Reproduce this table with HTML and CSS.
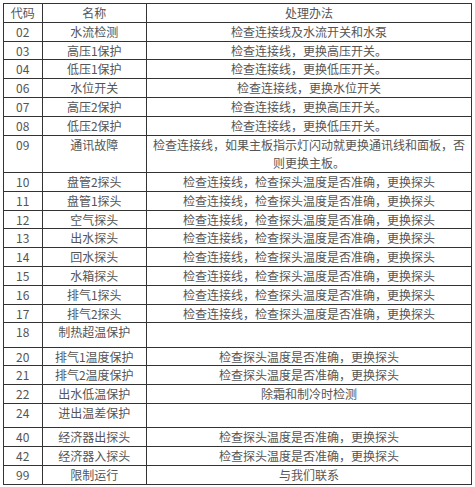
FILE: index.html
```html
<!DOCTYPE html>
<html lang="zh-CN">
<head>
<meta charset="utf-8">
<title>故障代码表</title>
<link rel="stylesheet" href="styles.css">
</head>
<body>
<table class="codes">
  <colgroup>
    <col class="c-code">
    <col class="c-name">
    <col class="c-fix">
  </colgroup>
  <tr><td>代码</td><td>名称</td><td>处理办法</td></tr>
  <tr><td>02</td><td>水流检测</td><td>检查连接线及水流开关和水泵</td></tr>
  <tr><td>03</td><td>高压1保护</td><td>检查连接线，更换高压开关。</td></tr>
  <tr><td>04</td><td>低压1保护</td><td>检查连接线，更换低压开关。</td></tr>
  <tr><td>06</td><td>水位开关</td><td>检查连接线，更换水位开关</td></tr>
  <tr><td>07</td><td>高压2保护</td><td>检查连接线，更换高压开关。</td></tr>
  <tr><td>08</td><td>低压2保护</td><td>检查连接线，更换低压开关。</td></tr>
  <tr class="double"><td>09</td><td>通讯故障</td><td>检查连接线，如果主板指示灯闪动就更换通讯线和面板，否则更换主板。</td></tr>
  <tr><td>10</td><td>盘管2探头</td><td>检查连接线，检查探头温度是否准确，更换探头</td></tr>
  <tr><td>11</td><td>盘管1探头</td><td>检查连接线，检查探头温度是否准确，更换探头</td></tr>
  <tr><td>12</td><td>空气探头</td><td>检查连接线，检查探头温度是否准确，更换探头</td></tr>
  <tr><td>13</td><td>出水探头</td><td>检查连接线，检查探头温度是否准确，更换探头</td></tr>
  <tr><td>14</td><td>回水探头</td><td>检查连接线，检查探头温度是否准确，更换探头</td></tr>
  <tr><td>15</td><td>水箱探头</td><td>检查连接线，检查探头温度是否准确，更换探头</td></tr>
  <tr><td>16</td><td>排气1探头</td><td>检查连接线，检查探头温度是否准确，更换探头</td></tr>
  <tr><td>17</td><td>排气2探头</td><td>检查连接线，检查探头温度是否准确，更换探头</td></tr>
  <tr class="tall"><td>18</td><td>制热超温保护</td><td></td></tr>
  <tr><td>20</td><td>排气1温度保护</td><td>检查探头温度是否准确，更换探头</td></tr>
  <tr><td>21</td><td>排气2温度保护</td><td>检查探头温度是否准确，更换探头</td></tr>
  <tr><td>22</td><td>出水低温保护</td><td>除霜和制冷时检测</td></tr>
  <tr class="tall"><td>24</td><td>进出温差保护</td><td></td></tr>
  <tr><td>40</td><td>经济器出探头</td><td>检查探头温度是否准确，更换探头</td></tr>
  <tr><td>42</td><td>经济器入探头</td><td>检查探头温度是否准确，更换探头</td></tr>
  <tr><td>99</td><td>限制运行</td><td>与我们联系</td></tr>
</table>
</body>
</html>
```
FILE: styles.css
```css
html, body {
  margin: 0;
  padding: 0;
  background: #ffffff;
}

body {
  padding: 3px 0 0 3px;
  font-family: "Noto Sans CJK SC", "Noto Sans", sans-serif;
  font-size: 12px;
  color: #555555;
}

.codes {
  border-collapse: collapse;
  table-layout: fixed;
  width: 468px;
  border: 1.5px solid #333333;
}

.c-code { width: 38.5px; }
.c-name { width: 104.5px; }
.c-fix { width: 325px; }

.codes td {
  border: 1px solid #333333;
  padding: 0 5px;
  height: 17.8px;
  line-height: 17.8px;
  text-align: center;
  vertical-align: top;
  overflow: hidden;
}

.codes tr.double td {
  height: 36.4px;
  line-height: 18.2px;
}

.codes tr.tall td {
  height: 23.3px;
}
```
